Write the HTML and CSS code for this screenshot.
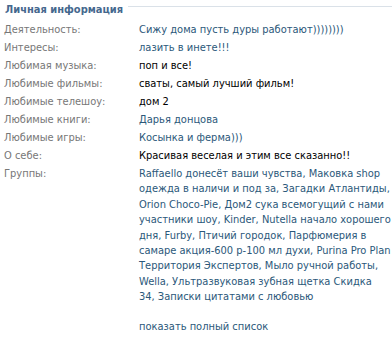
FILE: index.html
```html
<!DOCTYPE html>
<html lang="ru">
<head>
<meta charset="utf-8">
<link rel="stylesheet" href="styles.css">
</head>
<body>
<div class="block">
  <div class="header">
    <span class="title">Личная информация</span>
    <span class="rule"></span>
  </div>
  <div class="rows">
    <div class="row"><div class="label">Деятельность:</div><div class="value link">Сижу дома пусть дуры работают))))))))</div></div>
    <div class="row"><div class="label">Интересы:</div><div class="value link">лазить в инете!!!</div></div>
    <div class="row"><div class="label">Любимая музыка:</div><div class="value">поп и все!</div></div>
    <div class="row"><div class="label">Любимые фильмы:</div><div class="value">сваты, самый лучший фильм!</div></div>
    <div class="row"><div class="label">Любимые телешоу:</div><div class="value">дом 2</div></div>
    <div class="row"><div class="label">Любимые книги:</div><div class="value link">Дарья донцова</div></div>
    <div class="row"><div class="label">Любимые игры:</div><div class="value link">Косынка и ферма)))</div></div>
    <div class="row"><div class="label">О себе:</div><div class="value">Красивая веселая и этим все сказанно!!</div></div>
    <div class="row"><div class="label">Группы:</div><div class="value link groups">Raffaello донесёт ваши чувства, Маковка shop<br>одежда в наличи и под за, Загадки Атлантиды,<br>Orion Choco-Pie, Дом2 сука всемогущий с нами<br>участники шоу, Kinder, Nutella начало хорошего<br>дня, Furby, Птичий городок, Парфюмерия в<br>самаре акция-600 р-100 мл духи, Purina Pro Plan<br>Территория Экспертов, Мыло ручной работы,<br>Wella, Ультразвуковая зубная щетка Скидка<br>34, Записки цитатами с любовью</div></div>
    <div class="row more-row"><div class="label"></div><div class="value more">показать полный список</div></div>
  </div>
</div>
</body>
</html>
```

FILE: styles.css
```css
html, body {
  margin: 0;
  padding: 0;
  background: #fff;
}
body {
  font-family: "DejaVu Sans Condensed", "DejaVu Sans", sans-serif;
  font-stretch: condensed;
  font-size: 11px;
  color: #000;
}
.block {
  padding: 3px 0 0 4px;
}
.header {
  display: flex;
  align-items: flex-start;
  gap: 5px;
  height: 18px;
}
.title {
  font-weight: bold;
  color: #45688e;
  line-height: 14px;
  padding-left: 1px;
}
.rule {
  flex: 1;
  margin-top: 3px;
  border-top: 1px solid #dae1e8;
}
.rows {
  display: flex;
  flex-direction: column;
}
.row {
  display: flex;
  line-height: 15px;
  padding: 1px 0 2px;
}
.label {
  width: 135px;
  flex: none;
  color: #777;
}
.value {
  flex: 1;
  padding-right: 6px;
  white-space: nowrap;
}
.link {
  color: #2b587a;
}
.groups {
  line-height: 15.4px;
}
.more-row {
  margin-top: 11px;
}
.more {
  color: #2b587a;
}
```
